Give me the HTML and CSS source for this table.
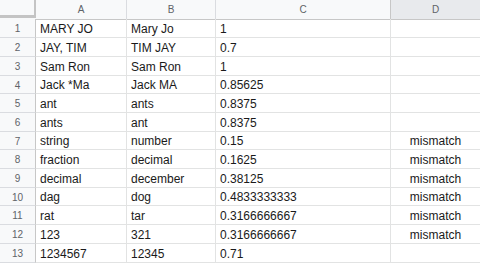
FILE: index.html
```html
<!DOCTYPE html>
<html>
<head>
<meta charset="utf-8">
<link rel="stylesheet" href="styles.css">
</head>
<body>
<div class="sheet">
  <div class="row head">
    <div class="corner"><div class="corner-mark"></div></div>
    <div class="colh">A</div>
    <div class="colh">B</div>
    <div class="colh">C</div>
    <div class="colh sel">D</div>
  </div>
  <div class="row r19"><div class="rowh">1</div><div class="c">MARY JO</div><div class="c">Mary Jo</div><div class="c">1</div><div class="c d"></div></div>
  <div class="row r19"><div class="rowh">2</div><div class="c">JAY, TIM</div><div class="c">TIM JAY</div><div class="c">0.7</div><div class="c d"></div></div>
  <div class="row r19"><div class="rowh">3</div><div class="c">Sam Ron</div><div class="c">Sam Ron</div><div class="c">1</div><div class="c d"></div></div>
  <div class="row r18"><div class="rowh">4</div><div class="c">Jack *Ma</div><div class="c">Jack MA</div><div class="c">0.85625</div><div class="c d"></div></div>
  <div class="row r19"><div class="rowh">5</div><div class="c">ant</div><div class="c">ants</div><div class="c">0.8375</div><div class="c d"></div></div>
  <div class="row r19"><div class="rowh">6</div><div class="c">ants</div><div class="c">ant</div><div class="c">0.8375</div><div class="c d"></div></div>
  <div class="row r18"><div class="rowh">7</div><div class="c">string</div><div class="c">number</div><div class="c">0.15</div><div class="c d">mismatch</div></div>
  <div class="row r19"><div class="rowh">8</div><div class="c">fraction</div><div class="c">decimal</div><div class="c">0.1625</div><div class="c d">mismatch</div></div>
  <div class="row r19"><div class="rowh">9</div><div class="c">decimal</div><div class="c">december</div><div class="c">0.38125</div><div class="c d">mismatch</div></div>
  <div class="row r18"><div class="rowh">10</div><div class="c">dag</div><div class="c">dog</div><div class="c">0.4833333333</div><div class="c d">mismatch</div></div>
  <div class="row r19"><div class="rowh">11</div><div class="c">rat</div><div class="c">tar</div><div class="c">0.3166666667</div><div class="c d">mismatch</div></div>
  <div class="row r19"><div class="rowh">12</div><div class="c">123</div><div class="c">321</div><div class="c">0.3166666667</div><div class="c d">mismatch</div></div>
  <div class="row r19"><div class="rowh">13</div><div class="c">1234567</div><div class="c">12345</div><div class="c">0.71</div><div class="c d"></div></div>
</div>
</body>
</html>
```

FILE: styles.css
```css
html, body {
  margin: 0;
  padding: 0;
  background: #ffffff;
}
body {
  width: 480px;
  height: 263px;
  overflow: hidden;
  font-family: "Liberation Sans", Arial, sans-serif;
}
.sheet {
  display: flex;
  flex-direction: column;
  width: 480px;
}
.row {
  display: grid;
  grid-template-columns: 36px 91px 89px 175px 89px;
}
.head { height: 19px; }
.r19 { height: 19px; }
.r18 { height: 18px; }

.corner {
  background: #f8f9fa;
  border-bottom: 1px solid #c7c7c7;
  box-sizing: border-box;
}
.corner-mark {
  width: 37px;
  height: 18px;
  box-sizing: border-box;
  border-right: 3px solid #c4c4c4;
  border-bottom: 3px solid #c4c4c4;
}
.colh {
  background: #f8f9fa;
  border-right: 1px solid #dadce0;
  border-bottom: 1px solid #c7c7c7;
  box-sizing: border-box;
  font-size: 10px;
  color: #5f6368;
  text-align: center;
  line-height: 19px;
}
.colh.sel {
  background: #e8eaed;
  border-left: 1px solid #c7c7c7;
  border-right: none;
  margin-left: -1px;
}
.rowh {
  background: #f8f9fa;
  border-right: 1px solid #c7c7c7;
  border-bottom: 1px solid #dadce0;
  box-sizing: border-box;
  font-size: 10px;
  color: #5f6368;
  text-align: center;
  display: flex;
  align-items: center;
  justify-content: center;
  padding-top: 1px;
}
.c {
  border-right: 1px solid #e2e3e3;
  border-bottom: 1px solid #e2e3e3;
  box-sizing: border-box;
  font-size: 12px;
  color: #1a1a1a;
  padding: 1px 4px 0 4px;
  display: flex;
  align-items: center;
  white-space: nowrap;
  overflow: hidden;
}
.c.d {
  justify-content: center;
  border-right: none;
}
```
